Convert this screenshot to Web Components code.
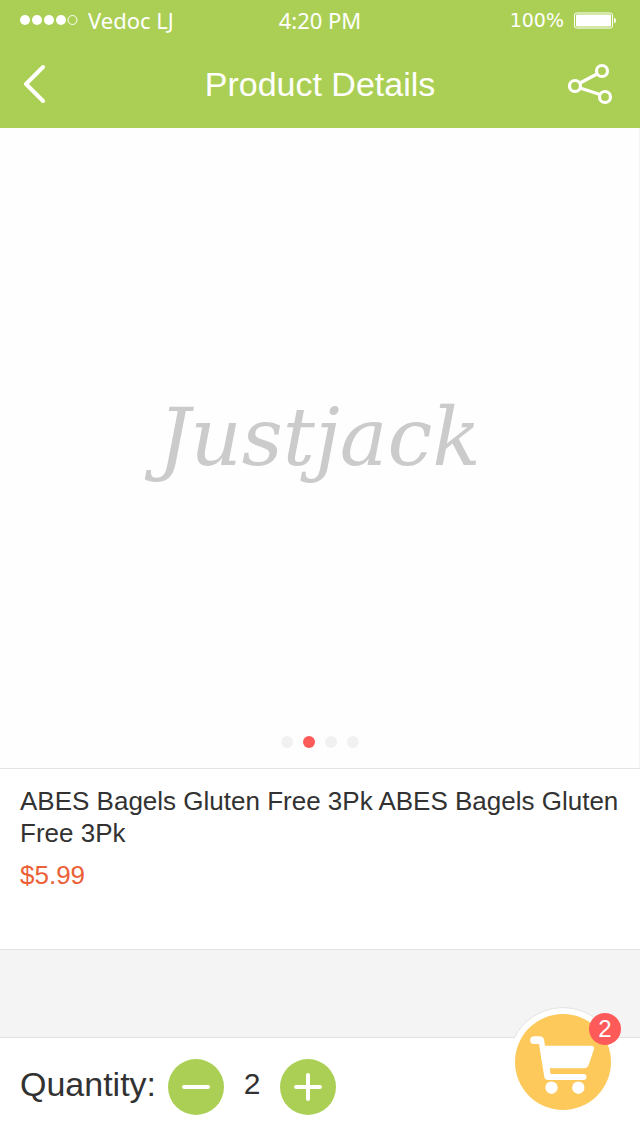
<!DOCTYPE html>
<html lang="en">
<head>
<meta charset="utf-8">
<meta name="viewport" content="width=device-width, initial-scale=1">
<title>Product Details</title>
<style>
:root{--green:#abcf54;--red:#ff5a5a;--yellow:#fcc95a;--line:#e3e3e3;--ink:#323232}
body{margin:0;background:#fff;color:var(--ink);font-family:"Liberation Sans",Arial,sans-serif}
</style>
</head>
<body>
<product-page></product-page>
<script>
function define(name, html){
  const template = document.createElement('template');
  template.innerHTML = '<style>*{box-sizing:border-box}button{border:0;padding:0;background:none;color:inherit;font:inherit;cursor:pointer}svg{display:block}</style>' + html;
  customElements.define(name, class extends HTMLElement{
    constructor(){
      super();
      this.attachShadow({mode:'open'}).append(template.content.cloneNode(true));
    }
  });
}

define('status-bar', `
<style>
:host{display:grid;grid-template-columns:1fr auto 1fr;align-items:center;height:40px;padding:0 20px;background:var(--green);color:#fff;font-family:"Noto Sans","Open Sans",sans-serif;font-size:22px;line-height:40px}
.side{display:flex;align-items:center;gap:10px}
.end{justify-content:flex-end}
.level{font-family:"DejaVu Sans",sans-serif;font-size:19px}
</style>
<div class="side">
  <svg width="58" height="12" viewBox="0 0 58 12" fill="#fff"><circle cx="5" cy="6" r="5"/><circle cx="17" cy="6" r="5"/><circle cx="29" cy="6" r="5"/><circle cx="41" cy="6" r="5"/><circle cx="52.500" cy="6" r="4.500" fill="none" stroke="#fff"/></svg>
  <span>Vedoc LJ</span>
</div>
<span>4:20 PM</span>
<div class="side end">
  <span class="level">100%</span>
  <svg width="46" height="17" viewBox="0 0 46 17"><rect x=".5" y="1" width="38" height="15" rx="2" fill="none" stroke="#fff"/><rect x="2" y="2.500" width="35" height="12" rx="1" fill="#fff"/><path d="M40 5.500q2 1 2 3t-2 3z" fill="#fff"/></svg>
</div>`);

define('title-bar', `
<style>
:host{display:flex;align-items:center;justify-content:space-between;height:88px;padding:0 24px;background:var(--green);color:#fff}
h1{margin:0;font-size:34px;font-weight:400;line-height:40px}
button{width:48px;height:48px}
.share{display:flex;justify-content:flex-end}
</style>
<button aria-label="Back"><svg width="24" height="48" viewBox="0 0 24 48" fill="none" stroke="#fff" stroke-width="4" stroke-linecap="round" stroke-linejoin="round"><path d="M19 7 2 24l17 17"/></svg></button>
<h1><slot></slot></h1>
<button class="share" aria-label="Share"><svg width="48" height="48" viewBox="0 0 48 48" fill="none" stroke="#fff" stroke-width="3.200"><circle cx="7" cy="26" r="5.500"/><circle cx="34" cy="11" r="5.500"/><circle cx="37" cy="37" r="5.500"/><path d="m12 23 17-9M12 28l20 6.500"/></svg></button>`);

define('product-gallery', `
<style>
:host{display:flex;flex-direction:column;aspect-ratio:1;background:#fefefe;border-right:1px solid #f4f4f4}
.slide{flex:1;display:flex;align-items:center;justify-content:center;padding-top:12px;color:#cbcbcb;font:italic 80px/96px "DejaVu Serif",serif}
nav{display:flex;justify-content:center;gap:10px;padding-bottom:20px}
button{width:12px;height:12px;border-radius:50%;background:#f1f1f1}
button[aria-current]{background:var(--red)}
</style>
<div class="slide"><slot></slot></div>
<nav aria-label="Pictures"><button aria-label="Picture 1"></button><button aria-label="Picture 2" aria-current="true"></button><button aria-label="Picture 3"></button><button aria-label="Picture 4"></button></nav>`);

define('product-info', `
<style>
:host{display:block;padding:16px 16px 58px 20px;border:solid var(--line);border-width:1px 0;background:#fff;font-size:26px;line-height:32px}
h2{margin:0 0 10px;font:inherit}
p{margin:0;color:#eb6036}
</style>
<h2><slot></slot></h2>
<p><slot name="price"></slot></p>`);

define('cart-button', `
<style>
:host{display:block}
button{display:block;position:relative}
.badge{position:absolute;left:81px;top:7px;width:32px;height:32px;border-radius:50%;background:var(--red);color:#fff;font-size:24px;line-height:32px;text-align:center}
</style>
<button aria-label="Cart">
  <svg width="112" height="112" viewBox="0 0 112 112">
    <clipPath id="above"><path d="M0 0h112v32H0z"/></clipPath>
    <circle cx="55" cy="56" r="54.500" fill="#fff" stroke="#e3e3e3" clip-path="url(#above)"/>
    <circle cx="55" cy="56" r="48" fill="#fcc95a"/>
    <path fill="#fff" d="M26 30.300h5.500q4 0 4.700 4.200L37 39.700h46q3.800 0 3 3.600l-5.200 15.200q-1.200 3.800-5 3.800h-34l.7 5.700h33a3 3 0 0 1 0 6H40q-3 0-3.700-3L31 38h-5a3.800 3.800 0 0 1 0-7.700z"/>
    <circle cx="43.500" cy="81.700" r="6.200" fill="#fff"/><circle cx="70.300" cy="81.700" r="6.200" fill="#fff"/>
  </svg>
  <span class="badge"><slot></slot></span>
</button>`);

define('quantity-bar', `
<style>
:host{display:flex;align-items:center;position:relative;height:99px;padding:0 20px;border-top:1px solid var(--line);background:#fff}
label{margin-right:12px;padding-bottom:6px;font-size:34px;line-height:40px}
input{width:56px;height:56px;padding:0 0 6px;border:0;background:none;color:inherit;font:30px/40px "Liberation Sans",Arial,sans-serif;text-align:center;outline:0}
button{width:56px;height:56px;border-radius:50%;background:var(--green)}
cart-button{position:absolute;right:20px;top:-32px}
</style>
<label for="amount">Quantity:</label>
<button aria-label="Less"><svg width="56" height="56" stroke="#fff" stroke-width="4" stroke-linecap="round"><path d="M16 28h24"/></svg></button>
<input id="amount" type="text" inputmode="numeric" value="2">
<button aria-label="More"><svg width="56" height="56" stroke="#fff" stroke-width="4" stroke-linecap="round"><path d="M16 28h24M28 16v24"/></svg></button>
<cart-button>2</cart-button>`);

define('product-page', `
<style>
:host{display:flex;flex-direction:column;min-height:100vh;background:#f4f4f4}
.space{flex:1;min-height:56px}
</style>
<status-bar></status-bar>
<title-bar>Product Details</title-bar>
<product-gallery>Justjack</product-gallery>
<product-info>ABES Bagels Gluten Free 3Pk ABES Bagels Gluten Free 3Pk<span slot="price">$5.99</span></product-info>
<div class="space"></div>
<quantity-bar></quantity-bar>`);
</script>
</body>
</html>
